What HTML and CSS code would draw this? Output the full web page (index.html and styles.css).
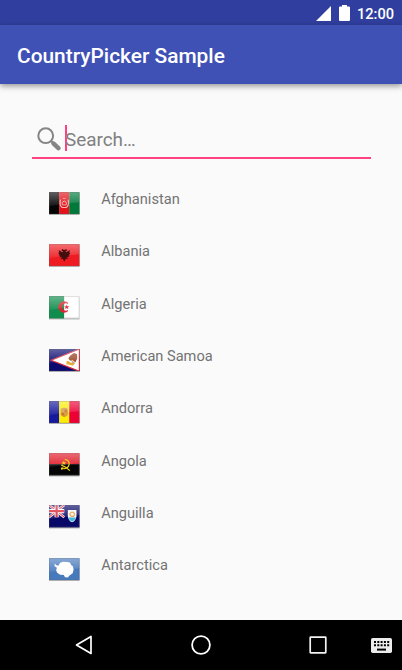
FILE: index.html
```html
<!DOCTYPE html>
<html lang="en">
<head>
<meta charset="utf-8">
<title>CountryPicker Sample</title>
<link rel="stylesheet" href="styles.css">
</head>
<body>
<svg width="0" height="0" class="defs">
  <defs>
    <linearGradient id="gloss" x1="0" y1="0" x2="0" y2="1">
      <stop offset="0" stop-color="#fff" stop-opacity=".36"/>
      <stop offset="1" stop-color="#fff" stop-opacity=".06"/>
    </linearGradient>
    <g id="shine">
      <path d="M0 0H30V10Q15 11 0 14Z" fill="url(#gloss)"/>
      <rect x=".5" y=".5" width="29" height="21" fill="none" stroke="#666" stroke-opacity=".2"/>
    </g>
  </defs>
</svg>
<div class="screen">
  <header class="statusbar">
    <svg class="signal" viewBox="0 0 15 15"><path d="M15 0V15H0Z" fill="#fff"/></svg>
    <svg class="battery" viewBox="0 0 11 16"><path d="M3 0H8V1.5H10Q11 1.5 11 2.5V15Q11 16 10 16H1Q0 16 0 15V2.5Q0 1.5 1 1.5H3Z" fill="#fff"/></svg>
    <span class="clock">12:00</span>
  </header>
  <div class="appbar"><h1 class="title">CountryPicker Sample</h1></div>
  <main class="content">
    <div class="search">
      <svg class="search-icon" viewBox="0 0 24 24" fill="none" stroke="#858585">
        <circle cx="8.7" cy="8.7" r="7.4" stroke-width="2"/>
        <path d="M14 14L17 17" stroke-width="2.4"/>
        <path d="M16.6 16.6L21.4 21.2" stroke-width="4.4" stroke-linecap="round"/>
      </svg>
      <span class="caret"></span>
      <span class="placeholder">Search…</span>
    </div>
    <ul class="countries">
      <li class="country">
        <svg class="flag" viewBox="0 0 30 22">
          <path d="M0 0H10V22H0Z" fill="#050505"/><path d="M10 0H20V22H10Z" fill="#e3121b"/><path d="M20 0H30V22H20Z" fill="#007a3b"/>
          <g fill="none" stroke="#f6b9b5"><path d="M11.3 7.5Q9.8 13 13 15.2H17Q20.2 13 18.7 7.5" stroke-width="1"/><path d="M13 12.7V10.2Q15 7.4 17 10.2V12.7Z" stroke-width=".9"/><path d="M13.5 6.4H16.5" stroke-width=".7"/></g>
          <use href="#shine"/>
        </svg>
        <span class="name">Afghanistan</span>
      </li>
      <li class="country">
        <svg class="flag" viewBox="0 0 30 22">
          <rect width="30" height="22" fill="#ee1c22"/><use href="#shine"/>
          <path d="M14.7 6L13 5L12.3 6.3L14 7.5L13 8L9.5 6L10 8L9 9L10.3 10L9.5 11L11 11.5L10.3 13L12.7 12.8L11.5 15L13.6 14.4L15 17.5L16.4 14.4L18.5 15L17.3 12.8L19.7 13L19 11.5L20.5 11L19.7 10L21 9L20 8L20.5 6L17 8L16 7.5L17.7 6.3L17 5L15.3 6Z" fill="#43100f"/>
        </svg>
        <span class="name">Albania</span>
      </li>
      <li class="country">
        <svg class="flag" viewBox="0 0 30 22">
          <path d="M0 0H15V22H0Z" fill="#108c4c"/><path d="M15 0H30V22H15Z" fill="#fff"/>
          <path d="M18.6 7.2A5.2 5.2 0 1 0 18.6 14.4A4.1 4.1 0 1 1 18.6 7.2Z" fill="#e3202f" stroke="#e3202f" stroke-width=".8"/>
          <path d="M17.5 8.3L18.1 10.1L20 10.1L18.5 11.2L19.1 13L17.5 11.9L15.9 13L16.4 11.2L14.8 10.1H16.8Z" fill="#e3202f"/>
          <use href="#shine"/>
        </svg>
        <span class="name">Algeria</span>
      </li>
      <li class="country">
        <svg class="flag" viewBox="0 0 30 22">
          <rect width="30" height="22" fill="#0b0b70"/><path d="M30 0L2 11L30 22Z" fill="#fff" stroke="#d32938" stroke-width="1.2"/>
          <path d="M24.5 4L21 6.5L19 9L20 10.7L23.5 11L26 13L27.8 9L27.5 5Z" fill="#9a4929"/>
          <path d="M17.5 11.5L20 12.2L22 14L26 13.5L23.5 16.5L20 15.5L17 15Z" fill="#e5ae37"/>
          <path d="M20 10.5L24 12.5M22 14L25.5 12.5" stroke="#9e643b" stroke-width=".7"/>
          <use href="#shine"/>
        </svg>
        <span class="name">American Samoa</span>
      </li>
      <li class="country">
        <svg class="flag" viewBox="0 0 30 22">
          <path d="M0 0H10V22H0Z" fill="#16199b"/><path d="M10 0H20V22H10Z" fill="#fbed05"/><path d="M20 0H30V22H20Z" fill="#ed0034"/>
          <path d="M11.5 7.5Q15 5.8 18.5 7.5V13Q18 15.5 15 16Q12 15.5 11.5 13Z" fill="#cf9a40"/>
          <path d="M12.5 8.4H14.7V11H12.5ZM15.4 11.6H17.6V14H15.4Z" fill="#dca13e"/><path d="M15.4 8.4H17.6V11H15.4ZM12.5 11.6H14.7V14H12.5Z" fill="#d46a32"/>
          <use href="#shine"/>
        </svg>
        <span class="name">Andorra</span>
      </li>
      <li class="country">
        <svg class="flag" viewBox="0 0 30 22">
          <rect width="30" height="11" fill="#e01827"/><rect y="11" width="30" height="11" fill="#050505"/>
          <use href="#shine"/>
          <path d="M15.5 6.2Q20.5 7 19.7 11.5Q18.7 15.8 14 15.2M12 12Q16 13 20.5 17.3" fill="none" stroke="#f0d318" stroke-width="1.2"/>
          <path d="M14.5 7.5L15.2 9L16.8 9L15.7 10.1L16.1 11.6L14.5 10.8L13 11.6L13.4 10.1L12.2 9H13.9ZM11.5 14.5L14 14V16L12 16.5Z" fill="#f0d318"/>
        </svg>
        <span class="name">Angola</span>
      </li>
      <li class="country">
        <svg class="flag" viewBox="0 0 30 22">
          <rect width="30" height="22" fill="#080868"/>
          <path d="M0 0L15 12M15 0L0 12" stroke="#fff" stroke-width="2.4"/><path d="M0 0L15 12M15 0L0 12" stroke="#dc2438" stroke-width="1"/>
          <path d="M7.5 0V12M0 6H15" stroke="#fff" stroke-width="4"/><path d="M7.5 0V12M0 6H15" stroke="#dc2438" stroke-width="2.2"/>
          <path d="M18.5 5H27V11Q26.5 15.5 22.7 17Q19 15.5 18.5 11Z" fill="#f5f5f0"/>
          <path d="M19 12.3H26.5Q25.7 15.2 22.7 16.4Q19.8 15.2 19 12.3Z" fill="#43b8db"/>
          <path d="M20.5 9Q21.5 6.5 24 7.3Q26 9 24.2 11Q21.5 12 20.5 9Z" fill="none" stroke="#e9a04a" stroke-width="1.3"/>
          <use href="#shine"/>
        </svg>
        <span class="name">Anguilla</span>
      </li>
      <li class="country">
        <svg class="flag" viewBox="0 0 30 22">
          <rect width="30" height="22" fill="#4779bd"/><use href="#shine"/>
          <path d="M5.5 5.5L7.3 7.2L9.2 7.5L11 4.7L14 3.7L18 4L20.5 4.5L22 7L23.5 8L24.2 11.5L23.3 15L20.5 17L18.5 19.2L15.8 19L14.5 16.6L11 16.5L8 14.5L7 12L7.8 9.5L5.5 8Z" fill="#fff"/>
        </svg>
        <span class="name">Antarctica</span>
      </li>
    </ul>
  </main>
  <nav class="navbar">
    <svg class="back" viewBox="0 0 18 20"><path d="M16 1.5V18.5L1.5 10Z" fill="none" stroke="#fff" stroke-width="1.7" stroke-linejoin="round"/></svg>
    <svg class="home" viewBox="0 0 20 20"><circle cx="10" cy="10" r="8.9" fill="none" stroke="#fff" stroke-width="1.8"/></svg>
    <svg class="recent" viewBox="0 0 18 18"><rect x="1.2" y="1.2" width="15.6" height="15.6" rx=".5" fill="none" stroke="#f2f2f2" stroke-width="1.7"/></svg>
    <svg class="keyboard" viewBox="0 0 21 15"><rect width="21" height="15" rx="1.8" fill="#ececec"/><path d="M3 4H18.3M3 7.3H18.3" stroke="#000" stroke-width="2" stroke-dasharray="2 1.3"/><path d="M6 11.6H15" stroke="#000" stroke-width="2"/></svg>
  </nav>
</div>
</body>
</html>
```
FILE: styles.css
```css
* { box-sizing: border-box; }
body { margin: 0; font-family: Roboto, sans-serif; background: #fafafa; }
svg { display: block; flex: none; }
.defs { position: absolute; }
.screen { width: 402px; height: 670px; display: flex; flex-direction: column; overflow: hidden; }
.statusbar { height: 25px; flex: none; background: #303f9f; display: flex; align-items: flex-start; justify-content: flex-end; padding: 5px 8px 0 0; color: #fff; }
.signal { width: 15px; height: 15px; margin-top: 1px; }
.battery { width: 11px; height: 16px; margin: 0 7px 0 8px; }
.clock { font-size: 14.6px; line-height: 18px; font-weight: 500; width: 37px; }
.appbar { height: 59px; flex: none; background: #3f51b5; display: flex; align-items: center; padding: 0 17px; box-shadow: 0 2px 6px rgba(0, 0, 0, .42); }
.title { margin: 0; font-size: 20.9px; font-weight: 500; color: #fff; line-height: 26px; padding-top: 2px; }
.content { flex: 1; padding: 36px 31px 0 32px; min-height: 0; }
.search { height: 39px; border-bottom: 2px solid #ff4081; display: flex; align-items: flex-start; padding: 6px 0 0 5px; }
.search-icon { width: 24px; height: 24px; margin-top: .6px; }
.caret { width: 2px; height: 26px; margin: -1px -2px 0 4px; background: #ff4081; }
.placeholder { font-size: 18.9px; line-height: 26px; padding-top: 1px; color: #808080; }
.countries { list-style: none; margin: 0; padding: 20px 0 0 17px; }
.country { height: 52.3px; display: flex; align-items: flex-start; gap: 21.7px; padding-top: 10.5px; }
.flag { width: 30.5px; height: 22.4px; margin-top: 2.2px; filter: drop-shadow(0 1px .5px rgba(0, 0, 0, .3)); }
.name { font-size: 14.6px; line-height: 18px; padding-top: .7px; color: #737373; }
.navbar { height: 50px; flex: none; background: #000; display: flex; align-items: center; padding-left: 75px; }
.back { width: 18px; height: 20px; }
.home { width: 20px; height: 20px; margin-left: 98px; }
.recent { width: 18px; height: 18px; margin-left: 98px; }
.keyboard { width: 21px; height: 15px; margin-left: 44px; }
```
